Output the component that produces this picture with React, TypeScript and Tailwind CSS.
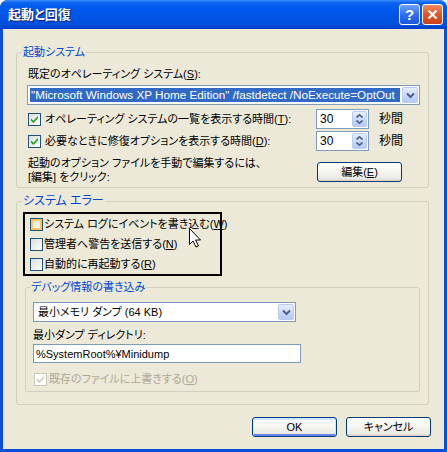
import React from "react";

const U = ({ c }: { c: string }) => <span className="underline underline-offset-[1px]">{c}</span>;

function CheckBox({ state }: { state: "on" | "off" | "hover" | "disabled" }) {
  if (state === "disabled") {
    return (
      <span className="w-[13px] h-[13px] shrink-0 border border-[#CAC8BB] bg-white flex items-center justify-center">
        <svg width="11" height="11" viewBox="0 0 11 11">
          <path d="M2 4.5 L4.3 6.8 L9 2.1 L9 4.3 L4.3 9 L2 6.7 Z" fill="#CAC8BB" />
        </svg>
      </span>
    );
  }
  if (state === "hover") {
    return (
      <span className="w-[13px] h-[13px] shrink-0 border border-[#1C5180] bg-[linear-gradient(135deg,#DCDCD7_0%,#FFFFFF_100%)] shadow-[inset_0_0_0_2px_#F9C65E]" />
    );
  }
  return (
    <span className="w-[13px] h-[13px] shrink-0 border border-[#1C5180] bg-[linear-gradient(135deg,#DCDCD7_0%,#FFFFFF_100%)] flex items-center justify-center">
      {state === "on" && (
        <svg width="11" height="11" viewBox="0 0 11 11">
          <path d="M2 4.5 L4.3 6.8 L9 2.1 L9 4.3 L4.3 9 L2 6.7 Z" fill="#21A121" />
        </svg>
      )}
    </span>
  );
}

function Chevron() {
  return (
    <svg width="9" height="7" viewBox="0 0 9 7">
      <path d="M1 1.5 L4.5 5 L8 1.5" fill="none" stroke="#4D6185" strokeWidth="2" />
    </svg>
  );
}

function DropBtn() {
  return (
    <span className="w-[16px] shrink-0 flex items-center justify-center rounded-[2px] border border-[#B9CBF3] bg-[linear-gradient(180deg,#E6EEFF_0%,#C8D8FC_55%,#B6CAF7_100%)]">
      <Chevron />
    </span>
  );
}

function Spin() {
  return (
    <div className="w-[53px] h-[20px] shrink-0 border border-[#7F9DB9] bg-white flex items-center justify-between pl-[3px] pr-[1px]">
      <span className="text-[12px]">30</span>
      <span className="w-[15px] h-[16px] rounded-[2px] border border-[#B9CBF3] bg-[linear-gradient(180deg,#E6EEFF_0%,#C8D8FC_55%,#B6CAF7_100%)] flex flex-col items-center justify-center gap-[2px]">
        <svg width="7" height="4" viewBox="0 0 7 4">
          <path d="M0.5 3.5 L3.5 0.8 L6.5 3.5" fill="none" stroke="#4D6185" strokeWidth="1.6" />
        </svg>
        <svg width="7" height="4" viewBox="0 0 7 4">
          <path d="M0.5 0.5 L3.5 3.2 L6.5 0.5" fill="none" stroke="#4D6185" strokeWidth="1.6" />
        </svg>
      </span>
    </div>
  );
}

function XPButton({ children, extra }: { children: React.ReactNode; extra?: string }) {
  return (
    <div
      className={
        "w-[85px] h-[20px] shrink-0 rounded-[3px] border border-[#003C74] bg-[linear-gradient(180deg,#FFFFFF_0%,#F6F6F2_45%,#ECEBE6_85%,#D6D0C5_100%)] flex items-center justify-center " +
        (extra ?? "")
      }
    >
      {children}
    </div>
  );
}

export default function App() {
  return (
    <div className="w-[447px] h-[452px] flex flex-col bg-[#0A4FDC] rounded-t-[8px] overflow-hidden font-['Liberation_Sans','Noto_Sans_CJK_JP',sans-serif] text-[11px] leading-[14px] text-black [font-feature-settings:'palt']">
      <div className="h-[29px] shrink-0 flex items-center justify-between pl-[8px] pr-[4px] bg-[linear-gradient(180deg,#3A8CFF_0%,#0A62F0_10%,#0058EE_30%,#0054E3_60%,#0050DC_85%,#003DC8_100%)]">
        <span className="text-white font-bold text-[13px] leading-[16px] [text-shadow:1px_1px_0_#0A1F6E]">起動と回復</span>
        <div className="flex gap-[2px]">
          <div className="w-[21px] h-[21px] rounded-[3px] border border-white bg-[linear-gradient(180deg,#6FA2FF_0%,#2D6FF0_50%,#1A56E0_100%)] flex items-center justify-center text-white font-bold text-[15px] leading-none">?</div>
          <div className="w-[21px] h-[21px] rounded-[3px] border border-white bg-[linear-gradient(180deg,#F08A63_0%,#E0552B_50%,#C7401A_100%)] flex items-center justify-center">
            <svg width="11" height="11" viewBox="0 0 11 11">
              <path d="M1.5 1.5 L9.5 9.5 M9.5 1.5 L1.5 9.5" stroke="white" strokeWidth="2.2" />
            </svg>
          </div>
        </div>
      </div>
      <div className="flex-1 mx-[3px] mb-[3px] bg-[#ECE9D8] relative flex flex-col">
        {/* 起動システム */}
        <fieldset className="mt-[16px] ml-[13px] w-[413px] border border-[#D0D0BF] rounded-[3px] pl-[11px] pr-[8px] pt-[8px] pb-[3px]">
          <legend className="-ml-[6px] px-[1px] text-[#0046D5]">起動システム</legend>
          <div>既定のオペレーティング システム(<U c="S" />):</div>
          <div className="mt-[4px] -ml-px h-[20px] flex items-stretch border border-[#7F9DB9] bg-white p-[1px] gap-[2px]">
            <div className="flex-1 min-w-0 my-[1px] ml-[1px] bg-[#316AC5] text-white text-[11.7px] flex items-center px-[1px] whitespace-nowrap overflow-hidden">
              "Microsoft Windows XP Home Edition" /fastdetect /NoExecute=OptOut
            </div>
            <DropBtn />
          </div>
          <div className="mt-[4px] h-[20px] flex items-center">
            <CheckBox state="on" />
            <span className="ml-[4px] w-[271px] whitespace-nowrap">オペレーティング システムの一覧を表示する時間(<U c="T" />):</span>
            <Spin />
            <span className="ml-[10px] text-[12px]">秒間</span>
          </div>
          <div className="mt-[2px] h-[20px] flex items-center">
            <CheckBox state="on" />
            <span className="ml-[4px] w-[271px] whitespace-nowrap">必要なときに修復オプションを表示する時間(<U c="D" />):</span>
            <Spin />
            <span className="ml-[10px] text-[12px]">秒間</span>
          </div>
          <div className="mt-[5px] flex items-start">
            <div className="w-[289px]">
              起動のオプション ファイルを手動で編集するには、
              <br />
              [編集] をクリック:
            </div>
            <XPButton extra="mt-[6px]">
              編集(<U c="E" />)
            </XPButton>
          </div>
        </fieldset>

        {/* システム エラー */}
        <fieldset className="mt-[6px] ml-[13px] w-[413px] border border-[#D0D0BF] rounded-[3px] pl-[6px] pr-[8px] pt-[4px] pb-[12px]">
          <legend className="-ml-[1px] px-[1px] text-[#0046D5] text-[12px]">システム エラー</legend>
          <div className="w-[199px] border-2 border-black pl-[5px] flex flex-col">
            <div className="h-[20px] flex items-center">
              <CheckBox state="hover" />
              <span className="ml-[1px] whitespace-nowrap">システム ログにイベントを書き込む(<U c="W" />)</span>
            </div>
            <div className="h-[20px] flex items-center">
              <CheckBox state="off" />
              <span className="ml-[1px] whitespace-nowrap">管理者へ警告を送信する(<U c="N" />)</span>
            </div>
            <div className="h-[20px] flex items-center">
              <CheckBox state="off" />
              <span className="ml-[1px] whitespace-nowrap">自動的に再起動する(<U c="R" />)</span>
            </div>
          </div>

          <fieldset className="mt-[4px] ml-[2px] w-[395px] border border-[#D0D0BF] rounded-[3px] pl-[7px] pr-[8px] pt-[8px] pb-[4px]">
            <legend className="-ml-[3px] px-[1px] text-[#0046D5]">デバッグ情報の書き込み</legend>
            <div className="w-[263px] h-[20px] flex items-stretch border border-[#7F9DB9] bg-white p-[1px]">
              <div className="flex-1 flex items-center pl-[3px] whitespace-nowrap">最小メモリ ダンプ (64 KB)</div>
              <DropBtn />
            </div>
            <div className="mt-[6px]">最小ダンプ ディレクトリ:</div>
            <div className="mt-[2px] w-[268px] h-[19px] border border-[#7F9DB9] bg-white flex items-center pl-[2px] whitespace-nowrap">
              %SystemRoot%¥Minidump
            </div>
            <div className="mt-[8px] h-[16px] flex items-center ml-[1px]">
              <CheckBox state="disabled" />
              <span className="ml-[2px] text-[#ACA899] whitespace-nowrap">既存のファイルに上書きする(<U c="O" />)</span>
            </div>
          </fieldset>
        </fieldset>

        <div className="mt-[12px] flex justify-end gap-[9px] pr-[13px]">
          <XPButton extra="shadow-[inset_0_1px_0_1px_#CEE7FF,inset_0_-1px_0_1px_#6982EE]">OK</XPButton>
          <XPButton>キャンセル</XPButton>
        </div>

        <svg className="absolute left-[185px] top-[198px]" width="14" height="21" viewBox="0 0 14 21">
          <path d="M1.5 1.5 L1.5 17.5 L5 14 L8 20 L10.5 19 L7.6 13 L12.5 13 Z" fill="white" stroke="black" strokeWidth="1" strokeLinejoin="miter" />
        </svg>
      </div>
    </div>
  );
}
